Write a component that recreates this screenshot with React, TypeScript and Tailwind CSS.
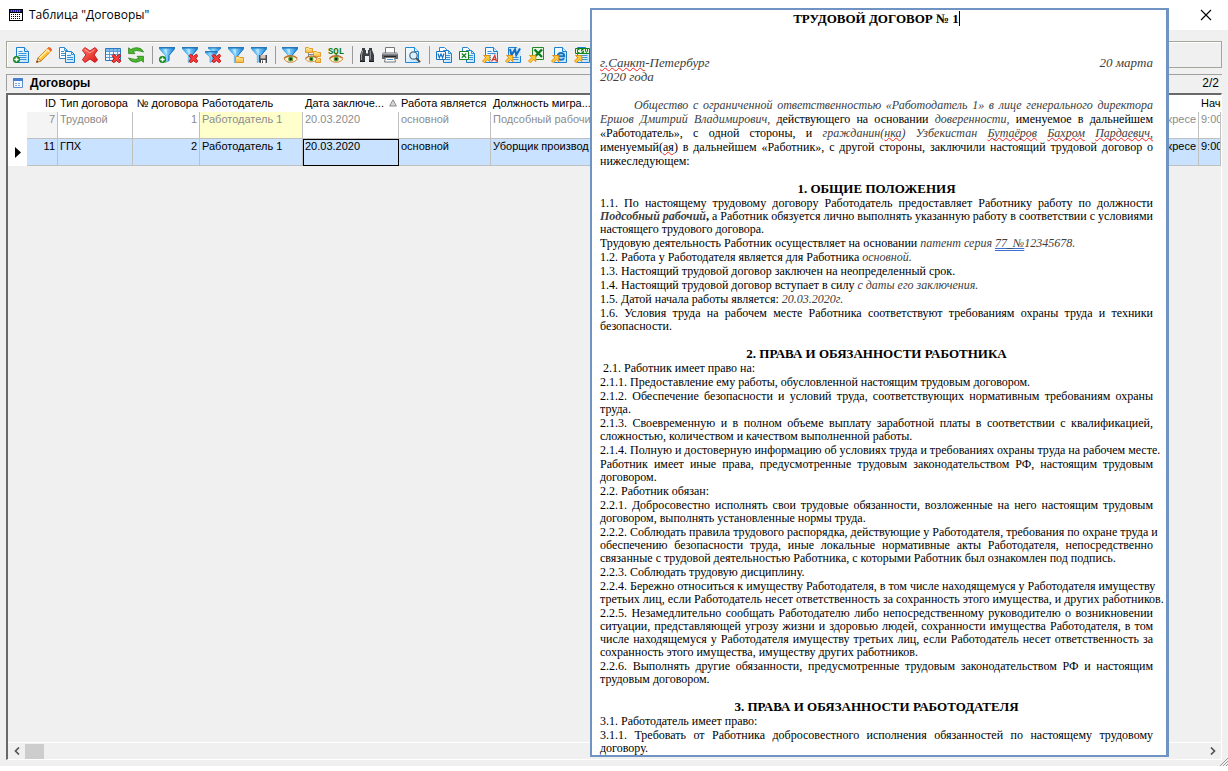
import type { ReactNode } from "react";

/* ---------- icon parts, all on a 16x16 grid ---------- */

function Icon({ children }: { children: ReactNode }) {
  return (
    <svg viewBox="0 0 16 16" className="size-4 shrink-0" aria-hidden="true">
      {children}
    </svg>
  );
}

function Gradients() {
  return (
    <svg className="absolute size-0" aria-hidden="true">
      <defs>
        <linearGradient id="funnel" x1="0" x2="1" y1="0" y2="0">
          <stop offset="0" stopColor="#2f9fe8" />
          <stop offset="0.4" stopColor="#8fd8ff" />
          <stop offset="1" stopColor="#1682d6" />
        </linearGradient>
        <linearGradient id="sheet" x1="0" x2="1" y1="0" y2="1">
          <stop offset="0" stopColor="#ffffff" />
          <stop offset="1" stopColor="#b9e2fb" />
        </linearGradient>
        <linearGradient id="folder" x1="0" x2="0" y1="0" y2="1">
          <stop offset="0" stopColor="#fff0a8" />
          <stop offset="1" stopColor="#f9b632" />
        </linearGradient>
        <linearGradient id="red" x1="0" x2="1" y1="0" y2="1">
          <stop offset="0" stopColor="#ff7a6a" />
          <stop offset="1" stopColor="#d81414" />
        </linearGradient>
      </defs>
    </svg>
  );
}

const Plus = () => (
  <g>
    <circle cx="3.5" cy="12.5" r="3.2" fill="#18981c" stroke="#0a6d12" strokeWidth="0.7" />
    <path d="M3.5 10.4v4.2M1.4 12.5h4.2" stroke="#fff" strokeWidth="1.4" />
  </g>
);

const SmallCross = () => (
  <path
    d="M8.6 7.2 11.5 9.4 14.4 7.2 15.8 8.6 13.8 11.4 15.8 14.3 14.3 15.7 11.5 13.6 8.7 15.7 7.1 14.3 9.1 11.4 7.1 8.7Z"
    fill="#f5403a"
    stroke="#c00d12"
    strokeWidth="1"
  />
);

const Funnel = () => (
  <g>
    <path d="M.3.5h15.4v1.3L10 8.4v5L6.3 15.6V8.4L.3 1.8Z" fill="url(#funnel)" stroke="#2a8ad2" strokeWidth="0.5" />
    <path d="M0 .8h16" stroke="#1769ad" strokeWidth="1.2" />
    <path d="M15.5 1.8 10 8.4v5L8.6 14.3" fill="none" stroke="#1570be" strokeWidth="0.9" />
    <path d="M4.5 2.5 8 7.5V2.5Z" fill="#c9eeff" opacity="0.7" />
  </g>
);

const Eye = () => (
  <g>
    <path d="M2 12C4 8.8 12.5 8.4 15.4 12 12.5 16.3 5 16.5 2 12Z" fill="#fff3dc" stroke="#d58a35" strokeWidth="1" />
    <path d="M2 11.4C5 7.8 12 7.6 15.2 11.2" fill="none" stroke="#b8702c" strokeWidth="1.2" />
    <circle cx="8.7" cy="12.1" r="2.5" fill="#4f9d2c" />
    <circle cx="8.7" cy="12" r="1.2" fill="#102a08" />
  </g>
);

const Page = ({ lines = true }: { lines?: boolean }) => (
  <g>
    <path d="M3.5.5h8l4 4v11h-12Z" fill="url(#sheet)" stroke="#1e7fd0" />
    <path d="M11.5.5v4h4" fill="#d6eefc" stroke="#1e7fd0" />
    {lines && <path d="M5.5 4.5h4M5.5 6.5h8M5.5 8.5h8M5.5 10.5h8M7 12.5h6.5" stroke="#3b93d8" />}
  </g>
);

const SmallPages = () => (
  <g>
    <path d="M3.5.5h5l3 3v8h-8Z" fill="#fff" stroke="#2a86d2" />
    <path d="M7.5 3.5h5l3 3v9h-8Z" fill="url(#sheet)" stroke="#1e7fd0" />
    <path d="M12.5 3.5v3h3M10 8.5h4M10 10.5h4M10 12.5h4" fill="none" stroke="#3b93d8" />
  </g>
);

const ExportArrow = () => (
  <path
    d="M1.5 8.5h6.3v6.2L5.6 12.6 2.3 15.8.5 14 3.7 10.7Z"
    fill="#ffca3a"
    stroke="#e28a0c"
    strokeWidth="0.9"
  />
);

/* ---------- toolbar icons ---------- */

const AddRecord = () => (
  <Icon>
    <Page />
    <Plus />
  </Icon>
);

const Edit = () => (
  <Icon>
    <path d="M.6 15.4 2 10.9 11.8 1.1Q13-.1 14.8 1.4 16.2 3 14.9 4.3L5.1 14Z" fill="#ffc233" stroke="#cf7a12" strokeWidth="0.9" />
    <path d="M3.4 11.3 11.3 3.3" stroke="#fff0a6" strokeWidth="1.5" />
    <path d="m11.8 1.1 3 3.2Q16.2 2.8 14.8 1.3 13-.1 11.8 1.1Z" fill="#ef5846" />
    <path d="m10.7 2.1 3.2 3.2" stroke="#f9e7cb" strokeWidth="1.2" />
    <path d="M.6 15.4 2 10.9 5.1 14Z" fill="#f6d6a5" stroke="#a96a29" strokeWidth="0.6" />
    <path d="M.4 15.6 1 13.6l1.4 1.3Z" fill="#382511" />
  </Icon>
);

const Copy = () => (
  <Icon>
    <path d="M.5.5h5l3 3v8h-8Z" fill="#fff" stroke="#2a86d2" />
    <path d="M5.5.5v3h3M2 4.5h3M2 6.5h4M2 8.5h4" fill="none" stroke="#3b93d8" />
    <path d="M6.5 4.5h6l3 3v8h-9Z" fill="url(#sheet)" stroke="#1e7fd0" />
    <path d="M12.5 4.5v3h3M8 8.5h4M8 10.5h6M8 12.5h6" fill="none" stroke="#3b93d8" />
  </Icon>
);

const Delete = () => (
  <Icon>
    <path
      d="M3 .6 8 4 12.9.6 15.5 3 12.2 7.9 15.6 13 12.9 15.4 8 12 3 15.4.4 12.9 3.8 7.9.4 3.1Z"
      fill="url(#red)"
      stroke="#c41218"
      strokeWidth="0.9"
    />
    <path d="m3 2.5 4.8 3.4 4.6-3.3" fill="none" stroke="#ffaea0" strokeWidth="0.9" />
  </Icon>
);

const ClearTable = () => (
  <Icon>
    <path d="M.5 1.5h15v12H.5Z" fill="#eef8ff" stroke="#2a78bd" />
    <path d="M1 2h14v2H1Z" fill="#7dbdee" />
    <path d="M4.5 2v11M8.5 2v11M12.5 2v11M1 4.5h14M1 7.5h14M1 10.5h14" stroke="#5b9dd6" />
    <SmallCross />
  </Icon>
);

const Refresh = () => (
  <Icon>
    <path d="M.6.8 2.8 2.6Q8-.8 13.4 2.1L15.5 5 12 4Q8 2.7 5 4.6L7 6.6H.6Z" fill="#4cb92c" stroke="#278017" strokeWidth="0.8" />
    <path d="m15.4 15.2-2.2-1.9Q8 16.8 2.500 13.700L.5 10.900 4 11.900q4 1.300 7-.6L9 9.300h6.400Z" fill="#4cb92c" stroke="#278017" strokeWidth="0.8" />
  </Icon>
);

const FilterAdd = () => (
  <Icon>
    <Funnel />
    <Plus />
  </Icon>
);

const FilterRemove = () => (
  <Icon>
    <Funnel />
    <SmallCross />
  </Icon>
);

const FilterRemoveAll = () => (
  <Icon>
    <path d="M3 .5h13v1L11.5 6v5L8.3 12V6L3 1.5Z" fill="url(#funnel)" />
    <path d="M3 .8h13" stroke="#1769ad" />
    <path d="M.3 4.5h12v1.3L8.3 10v4L5 15.4V10L.3 5.8Z" fill="url(#funnel)" stroke="#1f7fc8" strokeWidth="0.5" />
    <path d="M0 4.8h12.5" stroke="#1769ad" />
    <SmallCross />
  </Icon>
);

const FilterOpen = () => (
  <Icon>
    <Funnel />
    <path d="M7.5 9.5h3.2l1 1h3.8v5h-8Z" fill="url(#folder)" stroke="#d9911c" strokeWidth="0.9" />
  </Icon>
);

const FilterSave = () => (
  <Icon>
    <Funnel />
    <path d="M8 8h8v8H9l-1-1Z" fill="#4b4b52" />
    <path d="M9.5 8h5v3.5h-5Z" fill="#d9c3b9" />
    <path d="M10 13h4.5v3H10Z" fill="#fff" />
    <path d="M11 13.5h1V16h-1Z" fill="#4b4b52" />
  </Icon>
);

const FilterView = () => (
  <Icon>
    <Funnel />
    <Eye />
  </Icon>
);

const TreeView = () => (
  <Icon>
    <path d="M3.5 5v7.5M3.5 7.5H9" stroke="#81878d" fill="none" />
    <path d="M.5.5h3l1 1h3v4h-7Z" fill="url(#folder)" stroke="#df9522" strokeWidth="0.9" />
    <path d="M8.5 4.5h3l1 1h3v4h-7Z" fill="url(#folder)" stroke="#df9522" strokeWidth="0.9" />
    <path d="M10.5 10.5h2l1 1h2v4h-5Z" fill="url(#folder)" stroke="#df9522" strokeWidth="0.9" />
    <g transform="translate(-1.4 1.4) scale(.88)">
      <Eye />
    </g>
  </Icon>
);

const Sql = () => (
  <Icon>
    <text x="8" y="7" textAnchor="middle" fontSize="9" fontWeight="700" fontFamily="Liberation Mono, monospace" fill="#0d7a0d">
      SQL
    </text>
    <g transform="translate(-.5 0)">
      <Eye />
    </g>
  </Icon>
);

const Find = () => (
  <Icon>
    <path d="M3 1h3v2h1v3h2V3h1V1h3v2l2 5v7h-5V9H6v6H1V8l2-5Z" fill="#3c3f44" />
    <path d="M3.7 3.5 2.5 8v5M11.3 3.5v9" stroke="#9a9fa6" fill="none" />
    <path d="M7 6.5h2" stroke="#8c9198" />
    <path d="M1 14.5h5M10 14.5h5" stroke="#1b1c1e" />
  </Icon>
);

const Print = () => (
  <Icon>
    <path d="M3.5.5h9v6h-9Z" fill="#fff" stroke="#777" />
    <path d="M1 5.500h14l1 2v4.500H0V7.500Z" fill="#62666b" />
    <path d="M1 6h14v1.500H1Z" fill="#aeb2b6" />
    <path d="M2 9.500h12" stroke="#25272a" />
    <path d="M3.500 10.500h9l1 4.500h-11Z" fill="#fff" stroke="#777" />
    <path d="M5 12.500h6" stroke="#4a98d8" />
  </Icon>
);

const Preview = () => (
  <Icon>
    <path d="M.5.5h9l4 4v11H.5Z" fill="url(#sheet)" stroke="#1e8ad8" />
    <path d="M9.500.5v4h4" fill="#e2f4ff" stroke="#1e8ad8" />
    <circle cx="8.500" cy="8.500" r="3.700" fill="#d9f2ff" stroke="#59697a" strokeWidth="1.200" />
    <path d="m11.300 11.300 3.800 3.800" stroke="#56504c" strokeWidth="2" />
  </Icon>
);

const WordDoc = () => (
  <Icon>
    <SmallPages />
    <path d="M.5 4.500h9v8h-9Z" fill="#fff" stroke="#1673c4" />
    <path d="M2 6.500 3.300 10.700 5 7l1.600 3.700L8 6.500" fill="none" stroke="#1673c4" strokeWidth="1.200" />
  </Icon>
);

const ExcelDoc = () => (
  <Icon>
    <SmallPages />
    <path d="M.5 4.500h9v8h-9Z" fill="#fff" stroke="#168323" />
    <path d="m2.800 6.500 4.400 4.300M7.200 6.500 2.800 10.800" stroke="#168323" strokeWidth="1.300" />
  </Icon>
);

const ExportRtf = () => (
  <Icon>
    <Page />
    <path d="M9 8h6v7H9Z" fill="#f6f6fb" />
    <path d="m9.500 14.500 3.300-6 1.700 6M10.700 12.500h3.300" fill="none" stroke="#d6382d" strokeWidth="1.300" />
    <ExportArrow />
  </Icon>
);

const ExportWord = () => (
  <Icon>
    <Page />
    <path d="M4 1h12v8H4Z" fill="#cfe9fb" />
    <path d="m5 2 1.500 6L10 2.500 11.300 8 15 1.500" fill="none" stroke="#126bbd" strokeWidth="2" />
    <ExportArrow />
  </Icon>
);

const ExportExcel = () => (
  <Icon>
    <path d="M4.500.5h11v12h-11Z" fill="#e7f8e5" stroke="#25862b" />
    <path d="m6.500 2.500 7.500 7.500M14 2.500 6.500 10" stroke="#087719" strokeWidth="2.300" />
    <ExportArrow />
  </Icon>
);

const ExportHtml = () => (
  <Icon>
    <Page lines={false} />
    <path d="M6.800 9.300h6.500Q13.300 6 10 6 6.700 6.200 6.700 9.500 7 13 10.200 12.800q2 0 2.900-1.500" fill="none" stroke="#1672bd" strokeWidth="1.900" />
    <ExportArrow />
  </Icon>
);

const ExportCsv = () => (
  <Icon>
    <Page />
    <path d="M1.500 1.500h14v5h-14Z" fill="#e5f7df" stroke="#14801d" />
    <path d="M5.500 2.500h-2v3h2M9.500 2.500h-2v1.500h2v1.500h-2M11.500 2v2l1 1.500 1-1.500V2" fill="none" stroke="#14801d" />
    <ExportArrow />
  </Icon>
);

const toolbarGroups: { label: string; icon: ReactNode }[][] = [
  [
    { label: "Добавить", icon: <AddRecord /> },
    { label: "Изменить", icon: <Edit /> },
    { label: "Копировать", icon: <Copy /> },
    { label: "Удалить", icon: <Delete /> },
    { label: "Очистить таблицу", icon: <ClearTable /> },
    { label: "Обновить", icon: <Refresh /> },
  ],
  [
    { label: "Добавить фильтр", icon: <FilterAdd /> },
    { label: "Убрать фильтр", icon: <FilterRemove /> },
    { label: "Убрать все фильтры", icon: <FilterRemoveAll /> },
    { label: "Открыть фильтр", icon: <FilterOpen /> },
    { label: "Сохранить фильтр", icon: <FilterSave /> },
  ],
  [
    { label: "Показать фильтр", icon: <FilterView /> },
    { label: "Показать дерево", icon: <TreeView /> },
    { label: "Показать SQL", icon: <Sql /> },
  ],
  [
    { label: "Найти", icon: <Find /> },
    { label: "Печать", icon: <Print /> },
    { label: "Предварительный просмотр", icon: <Preview /> },
  ],
  [
    { label: "Документ Word", icon: <WordDoc /> },
    { label: "Документ Excel", icon: <ExcelDoc /> },
    { label: "Экспорт в RTF", icon: <ExportRtf /> },
    { label: "Экспорт в Word", icon: <ExportWord /> },
    { label: "Экспорт в Excel", icon: <ExportExcel /> },
    { label: "Экспорт в HTML", icon: <ExportHtml /> },
    { label: "Экспорт в CSV", icon: <ExportCsv /> },
  ],
];

/* ---------- window parts ---------- */

function TitleBar() {
  return (
    <header className="flex h-[30px] shrink-0 items-center bg-white pr-4 pl-[9px]">
      <svg viewBox="0 0 14 12" className="h-3 w-3.5" aria-hidden="true">
        <path d="M0 0h14v12H0Z" fill="#000" />
        <path d="M1 1h12v2H1Z" fill="#16168a" />
        <path d="M1 4h12v7H1Z" fill="#fff" />
        <path d="M2 5.5h10M2 7.5h10M2 9.5h10" stroke="#000" strokeDasharray="1 1" />
        <path d="M2 2h10" stroke="#c4c4f0" strokeDasharray="1 1" />
      </svg>
      <h1 className="ml-1.5 font-['Open_Sans',sans-serif] text-[12px] leading-4">Таблица "Договоры"</h1>
      <button type="button" aria-label="Закрыть" className="ml-auto">
        <svg viewBox="0 0 12 12" className="size-3" aria-hidden="true">
          <path d="m1 1 10 10M11 1 1 11" stroke="#000" strokeWidth="1.1" />
        </svg>
      </button>
    </header>
  );
}

function Toolbar() {
  return (
    <div role="toolbar" className="flex h-[27px] shrink-0 items-center border border-[#a5a598] pl-1.5 shadow-[inset_1px_1px_0_#fff]">
      {toolbarGroups.map((group, index) => (
        <div key={index} className="flex items-center">
          {index > 0 && <span className="mr-[6px] ml-px h-[18px] w-px bg-[#9a9a9a]" />}
          {group.map((item) => (
            <button key={item.label} type="button" aria-label={item.label} className="w-[23px]">
              {item.icon}
            </button>
          ))}
        </div>
      ))}
    </div>
  );
}

function CaptionBar() {
  return (
    <div className="mt-[6px] flex h-[17px] shrink-0 items-center border-t border-l border-[#a0a0a0] pr-[3px] pl-1.5">
      <svg viewBox="0 0 10 10" className="size-2.5" aria-hidden="true">
        <path d="M.5.5h9v9h-9Z" fill="#f4f9ff" stroke="#5b8fd6" />
        <path d="M0 0h10v3H0Z" fill="#4a7fd0" />
        <path d="M2 5.500h6M2 7.500h6" stroke="#7fa5dc" strokeDasharray="2 1" />
      </svg>
      <h2 className="ml-[7px] text-[12px] leading-4 font-bold">Договоры</h2>
      <output className="ml-auto text-[12px] leading-4">2/2</output>
    </div>
  );
}

const cell = "overflow-hidden border-r border-b border-[#c0c0c0] px-[2px] align-top whitespace-nowrap";
const head = "overflow-hidden px-[2px] pt-px align-top font-normal whitespace-nowrap";

function ContractsTable() {
  return (
    <table className="w-full table-fixed border-separate border-spacing-0 text-[11px] leading-[14px]">
      <colgroup>
        <col className="w-[19px]" />
        <col className="w-[31px]" />
        <col className="w-[75px]" />
        <col className="w-[67px]" />
        <col className="w-[103px]" />
        <col className="w-[96px]" />
        <col className="w-[92px]" />
        <col className="w-[120px]" />
        <col />
        <col className="w-[60px]" />
        <col className="w-[22px]" />
      </colgroup>
      <thead className="bg-white text-left">
        <tr className="h-[17px]">
          <th className={head} aria-label="Текущая строка" />
          <th className={`${head} text-right`}>ID</th>
          <th className={head}>Тип договора</th>
          <th className={`${head} text-right`}>№ договора</th>
          <th className={head}>Работодатель</th>
          <th className={head} aria-sort="ascending">
            <span className="flex items-center justify-between">
              Дата заключе...
              <svg viewBox="0 0 8 8" className="size-2" aria-hidden="true">
                <path d="M4 .8 7.400 7H.6Z" fill="#d5d5d5" stroke="#8c8c8c" />
              </svg>
            </span>
          </th>
          <th className={head}>Работа является</th>
          <th className={head}>Должность мигра...</th>
          <th className={head} />
          <th className={head} />
          <th className={head}>Нача</th>
        </tr>
      </thead>
      <tbody>
        <tr className="h-[27px] bg-white text-[#8c8c8c]">
          <td className="bg-white" />
          <td className={`${cell} bg-[#f4f4f4] text-right`}>7</td>
          <td className={cell}>Трудовой</td>
          <td className={`${cell} text-right`}>1</td>
          <td className={`${cell} bg-[#ffffcc]`}>Работодатель 1</td>
          <td className={cell}>20.03.2020</td>
          <td className={cell}>основной</td>
          <td className={cell}>Подсобный рабочий</td>
          <td className={cell} />
          <td className={`${cell} text-right`}>кресе</td>
          <td className={cell}>9:00</td>
        </tr>
        <tr className="h-[27px] bg-[#c8e2ff]" aria-selected="true">
          <td className="bg-white align-middle">
            <svg viewBox="0 0 6 11" className="ml-[7px] h-[11px] w-1.5" aria-hidden="true">
              <path d="M0 0 6 5.500 0 11Z" fill="#000" />
            </svg>
          </td>
          <td className={`${cell} text-right`}>11</td>
          <td className={cell}>ГПХ</td>
          <td className={`${cell} text-right`}>2</td>
          <td className={cell}>Работодатель 1</td>
          <td className={`${cell} outline outline-black -outline-offset-1`}>20.03.2020</td>
          <td className={cell}>основной</td>
          <td className={cell}>Уборщик производ</td>
          <td className={cell} />
          <td className={`${cell} text-right`}>кресе</td>
          <td className={cell}>9:00</td>
        </tr>
      </tbody>
    </table>
  );
}

function ScrollBar() {
  return (
    <div className="mt-auto flex h-[17px] items-center border-t border-white">
      <button type="button" aria-label="Прокрутить влево" className="flex w-[17px] justify-center">
        <svg viewBox="0 0 6 8" className="h-2 w-1.5" aria-hidden="true">
          <path d="M5 .5 1.500 4 5 7.500" fill="none" stroke="#555" strokeWidth="1.700" />
        </svg>
      </button>
      <span className="h-[15px] w-[19px] bg-[#cdcdcd]" />
      <button type="button" aria-label="Прокрутить вправо" className="ml-auto flex w-[17px] justify-center">
        <svg viewBox="0 0 6 8" className="h-2 w-1.5" aria-hidden="true">
          <path d="M1 .5 4.500 4 1 7.500" fill="none" stroke="#555" strokeWidth="1.700" />
        </svg>
      </button>
    </div>
  );
}

/* ---------- contract document ---------- */

const Field = ({ children }: { children: ReactNode }) => <em className="text-[#404040]">{children}</em>;

const Misspelt = ({ children }: { children: ReactNode }) => (
  <span className="underline decoration-[#ff2020] decoration-wavy decoration-1 underline-offset-0 [text-decoration-skip-ink:none]">
    {children}
  </span>
);

/* A paragraph set line by line; every line but the last is justified. */
function Lines({ lines }: { lines: ReactNode[] }) {
  return (
    <p className="whitespace-nowrap">
      {lines.map((line, index) => (
        <span key={index} className={index < lines.length - 1 ? "block [text-align-last:justify]" : "block"}>
          {line}
        </span>
      ))}
    </p>
  );
}

function Section({ title, paragraphs }: { title: string; paragraphs: ReactNode[][] }) {
  return (
    <section className="mt-3.5 flex flex-col gap-px">
      <h3 className="text-center text-[13px] leading-[14px] font-bold">{title}</h3>
      {paragraphs.map((lines, index) => (
        <Lines key={index} lines={lines} />
      ))}
    </section>
  );
}

const generalTerms: ReactNode[][] = [
  [
    "1.1. По настоящему трудовому договору Работодатель предоставляет Работнику работу по должности",
    <>
      <b>
        <Field>Подсобный рабочий</Field>,
      </b>{" "}
      а Работник обязуется лично выполнять указанную работу в соответствии с условиями
    </>,
    "настоящего трудового договора.",
  ],
  [
    <>
      Трудовую деятельность Работник осуществляет на основании{" "}
      <Field>
        патент серия{" "}
        <span className="underline decoration-[#3b6fd0] decoration-double decoration-1 underline-offset-1">77_№</span>12345678.
      </Field>
    </>,
  ],
  [
    <>
      1.2. Работа у Работодателя является для Работника <Field>основной.</Field>
    </>,
  ],
  ["1.3. Настоящий трудовой договор заключен на неопределенный срок."],
  [
    <>
      1.4. Настоящий трудовой договор вступает в силу <Field>с даты его заключения.</Field>
    </>,
  ],
  [
    <>
      1.5. Датой начала работы является: <Field>20.03.2020г.</Field>
    </>,
  ],
  ["1.6. Условия труда на рабочем месте Работника соответствуют требованиям охраны труда и техники", "безопасности."],
];

const workerTerms: ReactNode[][] = [
  [<span className="pl-[3px]">2.1. Работник имеет право на:</span>],
  ["2.1.1. Предоставление ему работы, обусловленной настоящим трудовым договором."],
  ["2.1.2. Обеспечение безопасности и условий труда, соответствующих нормативным требованиям охраны", "труда."],
  [
    "2.1.3. Своевременную и в полном объеме выплату заработной платы в соответствии с квалификацией,",
    "сложностью, количеством и качеством выполненной работы.",
  ],
  ["2.1.4. Полную и достоверную информацию об условиях труда и требованиях охраны труда на рабочем месте."],
  ["Работник имеет иные права, предусмотренные трудовым законодательством РФ, настоящим трудовым", "договором."],
  ["2.2. Работник обязан:"],
  [
    "2.2.1. Добросовестно исполнять свои трудовые обязанности, возложенные на него настоящим трудовым",
    "договором, выполнять установленные нормы труда.",
  ],
  [
    "2.2.2. Соблюдать правила трудового распорядка, действующие у Работодателя, требования по охране труда и",
    "обеспечению безопасности труда, иные локальные нормативные акты Работодателя, непосредственно",
    "связанные с трудовой деятельностью Работника, с которыми Работник был ознакомлен под подпись.",
  ],
  ["2.2.3. Соблюдать трудовую дисциплину."],
  [
    "2.2.4. Бережно относиться к имуществу Работодателя, в том числе находящемуся у Работодателя имуществу",
    "третьих лиц, если Работодатель несет ответственность за сохранность этого имущества, и других работников.",
  ],
  [
    "2.2.5. Незамедлительно сообщать Работодателю либо непосредственному руководителю о возникновении",
    "ситуации, представляющей угрозу жизни и здоровью людей, сохранности имущества Работодателя, в том",
    "числе находящемуся у Работодателя имуществу третьих лиц, если Работодатель несет ответственность за",
    "сохранность этого имущества, имуществу других работников.",
  ],
  ["2.2.6. Выполнять другие обязанности, предусмотренные трудовым законодательством РФ и настоящим", "трудовым договором."],
];

const employerTerms: ReactNode[][] = [
  ["3.1. Работодатель имеет право:"],
  ["3.1.1. Требовать от Работника добросовестного исполнения обязанностей по настоящему трудовому", "договору."],
];

function ContractDocument() {
  return (
    <article className="absolute top-2 right-[59px] w-[579px] border-2 border-r-[3px] border-[#6f93c2] bg-white pr-[13px] pl-2 font-['Liberation_Serif',serif] text-[12px] leading-[13px]">
      <h2 className="mt-0.5 text-center text-[13px] leading-[14px] font-bold">
        ТРУДОВОЙ ДОГОВОР № 1<span className="border-r border-black" />
      </h2>
      <p className="mt-[30px] text-[13px] leading-[14px]">
        <Field>
          <span className="flex justify-between">
            <span>
              <Misspelt>г.Санкт</Misspelt>-Петербург
            </span>
            <span>20 марта</span>
          </span>
          2020 года
        </Field>
      </p>
      <div className="mt-3.5 leading-[14px]">
        <Lines
          lines={[
            <span className="pl-[34px]">
              <Field>Общество с ограниченной ответственностью «Работодатель 1» в лице генерального директора</Field>
            </span>,
            <>
              <Field>Ершов Дмитрий Владимирович,</Field> действующего на основании <Field>доверенности,</Field> именуемое в
              дальнейшем
            </>,
            <>
              «Работодатель», с одной стороны, и{" "}
              <Field>
                гражданин(<Misspelt>нка</Misspelt>) Узбекистан <Misspelt>Бутаёров</Misspelt> <Misspelt>Бахром</Misspelt>{" "}
                <Misspelt>Пардаевич,</Misspelt>
              </Field>
            </>,
            <>
              именуемый(<Misspelt>ая</Misspelt>) в дальнейшем «Работник», с другой стороны, заключили настоящий трудовой
              договор о
            </>,
            "нижеследующем:",
          ]}
        />
      </div>
      <Section title="1. ОБЩИЕ ПОЛОЖЕНИЯ" paragraphs={generalTerms} />
      <Section title="2. ПРАВА И ОБЯЗАННОСТИ РАБОТНИКА" paragraphs={workerTerms} />
      <Section title="3. ПРАВА И ОБЯЗАННОСТИ РАБОТОДАТЕЛЯ" paragraphs={employerTerms} />
    </article>
  );
}

export default function App() {
  return (
    <div className="relative flex min-h-screen flex-col bg-white pb-[5px] font-['Liberation_Sans',Arial,sans-serif] text-black">
      <Gradients />
      <TitleBar />
      <main className="flex grow flex-col bg-[#f0f0f0] px-1.5 pt-[11px] pb-[6px]">
        <Toolbar />
        <CaptionBar />
        <div className="mt-0.5 flex grow flex-col border-t-2 border-r border-b border-l-2 border-t-[#696969] border-r-white border-b-white border-l-[#696969]">
          <ContractsTable />
          <ScrollBar />
        </div>
      </main>
      <svg viewBox="0 0 8 8" className="absolute right-0 bottom-[5px] size-2" aria-hidden="true">
        <path d="M0 8 8 0M3 8 8 3M6 8 8 6" stroke="#9a9a9a" />
      </svg>
      <ContractDocument />
    </div>
  );
}
